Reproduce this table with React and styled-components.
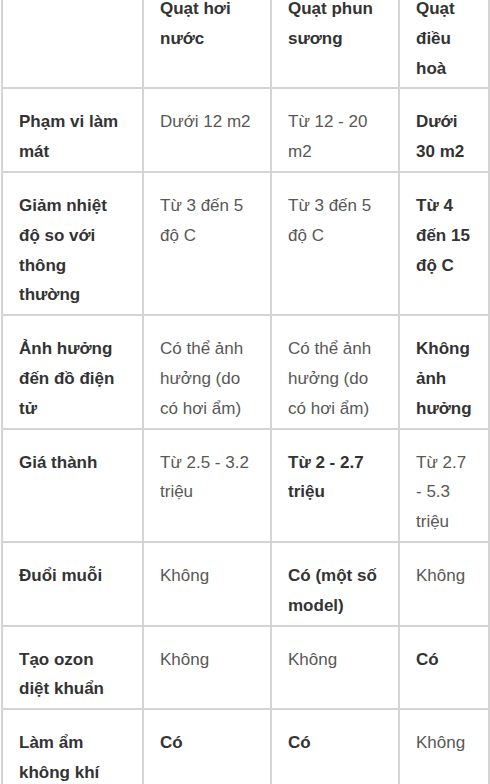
import React from "react";
import styled, { createGlobalStyle } from "styled-components";

const Global = createGlobalStyle`
  html, body { margin: 0; padding: 0; background: #ffffff; }
  body { font-family: "Liberation Sans", Arial, sans-serif; overflow: hidden; }
`;

const Page = styled.div`
  width: 490px;
  height: 784px;
  overflow: hidden;
  background: #ffffff;
`;

const Table = styled.table`
  margin: -26px 0 0 1px;
  width: 489px;
  table-layout: fixed;
  border-collapse: separate;
  border-spacing: 0;
  border-left: 2px solid #d4d4d4;
  border-top: 2px solid #d4d4d4;
  font-size: 17px;
  line-height: 29.8px;
`;

const Col = styled.col`
  width: ${(p) => p.$w}px;
`;

const Cell = styled.td`
  vertical-align: top;
  padding: 18px 16px 4px 16px;
  border-right: 2px solid #d4d4d4;
  border-bottom: 2px solid #d4d4d4;
  color: ${(p) => (p.$bold ? "#333333" : "#585858")};
  font-weight: ${(p) => (p.$bold ? 700 : 400)};
  word-wrap: break-word;
`;

const rows = [
  [
    { t: "", b: true },
    { t: "Quạt hơi nước", b: true },
    { t: "Quạt phun sương", b: true },
    { t: "Quạt điều hoà", b: true },
  ],
  [
    { t: "Phạm vi làm mát", b: true },
    { t: "Dưới 12 m2" },
    { t: "Từ 12 - 20 m2" },
    { t: "Dưới 30 m2", b: true },
  ],
  [
    { t: "Giảm nhiệt độ so với thông thường", b: true },
    { t: "Từ 3 đến 5 độ C" },
    { t: "Từ 3 đến 5 độ C" },
    { t: "Từ 4 đến 15 độ C", b: true },
  ],
  [
    { t: "Ảnh hưởng đến đồ điện tử", b: true },
    { t: "Có thể ảnh hưởng (do có hơi ẩm)" },
    { t: "Có thể ảnh hưởng (do có hơi ẩm)" },
    { t: "Không ảnh hưởng", b: true },
  ],
  [
    { t: "Giá thành", b: true },
    { t: "Từ 2.5 - 3.2 triệu" },
    { t: "Từ 2 - 2.7 triệu", b: true },
    { t: "Từ 2.7 - 5.3 triệu" },
  ],
  [
    { t: "Đuổi muỗi", b: true },
    { t: "Không" },
    { t: "Có (một số model)", b: true },
    { t: "Không" },
  ],
  [
    { t: "Tạo ozon diệt khuẩn", b: true },
    { t: "Không" },
    { t: "Không" },
    { t: "Có", b: true },
  ],
  [
    { t: "Làm ẩm không khí", b: true },
    { t: "Có", b: true },
    { t: "Có", b: true },
    { t: "Không" },
  ],
];

export default function App() {
  return (
    <Page>
      <Global />
      <Table>
        <colgroup>
          <Col $w={141} />
          <Col $w={128} />
          <Col $w={128} />
          <Col $w={90} />
        </colgroup>
        <tbody>
          {rows.map((r, i) => (
            <tr key={i}>
              {r.map((c, j) => (
                <Cell key={j} $bold={c.b}>
                  {c.t}
                </Cell>
              ))}
            </tr>
          ))}
        </tbody>
      </Table>
    </Page>
  );
}
